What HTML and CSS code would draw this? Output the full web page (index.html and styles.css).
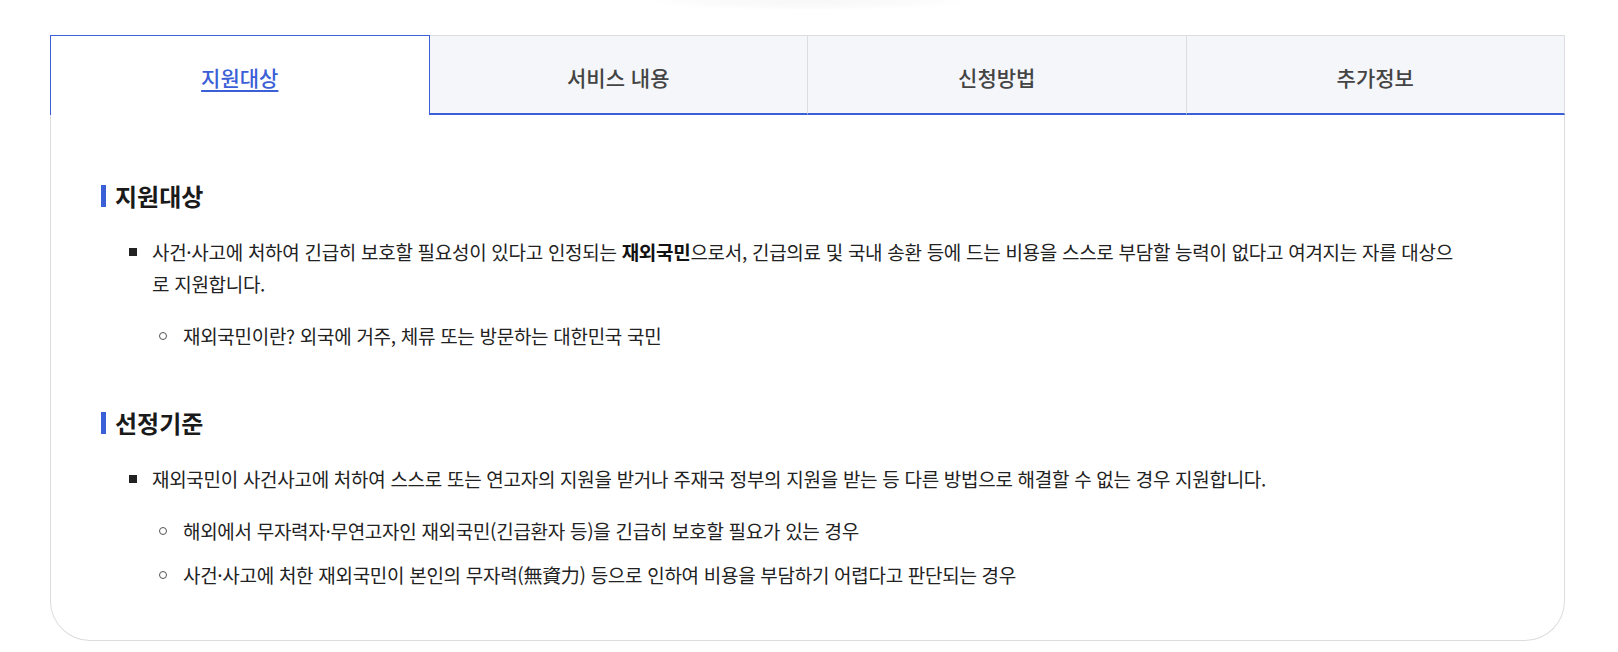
FILE: index.html
```html
<!DOCTYPE html>
<html lang="ko">
<head>
  <meta charset="utf-8">
  <title>지원대상</title>
  <meta name="viewport" content="width=device-width,initial-scale=1">
  <link rel="stylesheet" href="styles.css">
</head>
<body>
  <div class="top">
    <div class="top_shade"></div>
  </div>

  <div class="card">
    <ul class="tabs">
      <li class="tab is-active"><a href="#">지원대상</a></li>
      <li class="tab"><a href="#">서비스 내용</a></li>
      <li class="tab"><a href="#">신청방법</a></li>
      <li class="tab"><a href="#">추가정보</a></li>
    </ul>

    <div class="panel">
      <section class="block">
        <h3 class="block_title">지원대상</h3>
        <ul class="dash">
          <li>사건·사고에 처하여 긴급히 보호할 필요성이 있다고 인정되는 <strong>재외국민</strong>으로서, 긴급의료 및 국내 송환 등에 드는 비용을 스스로 부담할 능력이 없다고 여겨지는 자를 대상으로 지원합니다.
            <ul class="sub">
              <li>재외국민이란? 외국에 거주, 체류 또는 방문하는 대한민국 국민</li>
            </ul>
          </li>
        </ul>
      </section>

      <section class="block">
        <h3 class="block_title">선정기준</h3>
        <ul class="dash">
          <li>재외국민이 사건사고에 처하여 스스로 또는 연고자의 지원을 받거나 주재국 정부의 지원을 받는 등 다른 방법으로 해결할 수 없는 경우 지원합니다.
            <ul class="sub">
              <li>해외에서 무자력자·무연고자인 재외국민(긴급환자 등)을 긴급히 보호할 필요가 있는 경우</li>
              <li>사건·사고에 처한 재외국민이 본인의 무자력(無資力) 등으로 인하여 비용을 부담하기 어렵다고 판단되는 경우</li>
            </ul>
          </li>
        </ul>
      </section>
    </div>
  </div>
</body>
</html>
```

FILE: styles.css
```css
html,
body {
  margin: 0;
  background: #fff;
  font-family: "Noto Sans CJK KR", "Noto Sans", sans-serif;
  color: #222;
}

.top {
  height: 35px;
}

.top_shade {
  width: 310px;
  height: 10px;
  margin: 0 auto;
  background: radial-gradient(ellipse at 50% 0%, #f7f7f7 0%, #fbfbfb 50%, rgba(255, 255, 255, 0) 75%);
}

.card {
  width: 1513px;
  margin-left: 50px;
  border: 1px solid #dcdcdc;
  border-top: 0;
  border-radius: 0 0 40px 40px;
  background: #fff;
}

/* tabs */
.tabs {
  display: flex;
  margin: 0 -1px;
  padding: 0;
  list-style: none;
}

.tab {
  flex: 1;
  display: flex;
  align-items: center;
  justify-content: center;
  box-sizing: border-box;
  height: 80px;
  padding-top: 5px;

  background: #f4f6fa;
  border-top: 1px solid #dcdde2;
  border-bottom: 2px solid #3b5fd6;
  border-left: 1px solid #dcdde2;
}

.tab:last-child {
  border-right: 1px solid #dcdde2;
}

.tab a {
  font-size: 21px;
  font-weight: 500;
  color: #444;
  text-decoration: none;
}

.tab.is-active {
  background: #fff;
  border: 1px solid #3b5fd6;
  border-bottom: 0;
  padding-bottom: 2px;
}

.tab.is-active + .tab {
  border-left: 0;
}

.tab.is-active a {
  color: #3b5fd6;
  text-decoration: underline;
  text-decoration-thickness: 2px;
  text-underline-offset: 4px;
}

/* panel */
.panel {
  padding: 65px 102px 49px 50px;
}

.block + .block {
  margin-top: 55px;
}

.block_title {
  display: flex;
  align-items: center;
  gap: 9px;
  margin: 0;
  font-size: 24px;
  line-height: 31px;
  font-weight: 700;
  color: #1a1a1a;
}

.block_title:before {
  content: '';
  display: block;
  width: 5px;
  height: 22px;
  background: #3b5fd6;
}

.dash {
  margin: 25px 0 0 0;
  padding: 0 0 0 51px;
  list-style: none;
  font-size: 19px;
  letter-spacing: -0.3px;
  line-height: 32px;
}

.dash > li {
  position: relative;
}

.dash > li:before {
  content: '';
  position: absolute;
  left: -23px;
  top: 12px;
  width: 8px;
  height: 8px;
  background: #222;
}

.dash strong {
  font-weight: 700;
  color: #111;
}

.sub {
  margin: 20px 0 0 0;
  padding: 0 0 0 31px;
  list-style: none;
}

.sub > li {
  position: relative;
}

.sub > li + li {
  margin-top: 12px;
}

.sub > li:before {
  content: '';
  position: absolute;
  left: -24px;
  top: 12px;
  width: 6px;
  height: 6px;
  border: 1px solid #555;
  border-radius: 50%;
}
```
